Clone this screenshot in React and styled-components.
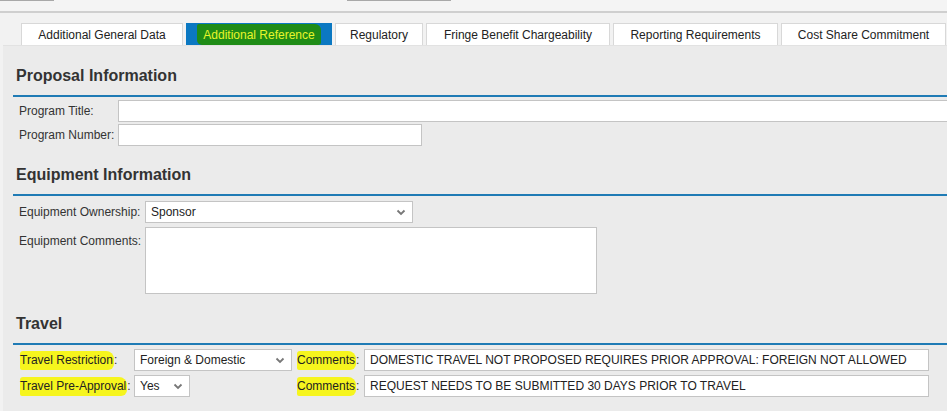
import React from "react";
import styled, { createGlobalStyle } from "styled-components";

const GlobalStyle = createGlobalStyle`
  html, body {
    margin: 0;
    padding: 0;
    background: #f2f2f2;
    overflow: hidden;
  }
  body {
    font-family: "Liberation Sans", Arial, sans-serif;
    font-size: 12px;
    color: #333;
  }
`;

const tabs = [
  { label: "Additional General Data", width: 162 },
  { label: "Additional Reference", width: 146, active: true },
  { label: "Regulatory", width: 88 },
  { label: "Fringe Benefit Chargeability", width: 184 },
  { label: "Reporting Requirements", width: 165 },
  { label: "Cost Share Commitment", width: 165 },
];

const Chevron = () => (
  <svg width="10" height="7" viewBox="0 0 10 7">
    <path d="M1.5 1.5 L5 5 L8.5 1.5" fill="none" stroke="#777" strokeWidth="1.8" />
  </svg>
);

const App = () => {
  return (
    <>
      <GlobalStyle />
      <TopStrip>
        <StubBox $left={0} $width={54} />
        <StubBox $left={293} $width={104} />
      </TopStrip>
      <TabBar>
        {tabs.map((t) => (
          <Tab key={t.label} $width={t.width} $active={t.active}>
            {t.active ? <TabMark>{t.label}</TabMark> : t.label}
          </Tab>
        ))}
      </TabBar>
      <Panel>
        <SectionHeader>Proposal Information</SectionHeader>
        <Rows>
          <FieldRow $labelWidth={99}>
            <Label>Program Title:</Label>
            <TextBox $width={860} />
          </FieldRow>
          <FieldRow $labelWidth={99}>
            <Label>Program Number:</Label>
            <TextBox $width={304} />
          </FieldRow>
        </Rows>

        <SectionHeader $gap={-1}>Equipment Information</SectionHeader>
        <Rows $top={5}>
          <FieldRow $labelWidth={126}>
            <Label>Equipment Ownership:</Label>
            <Select $width={268}>
              <span>Sponsor</span>
              <Chevron />
            </Select>
          </FieldRow>
          <FieldRow $labelWidth={126} $top>
            <Label $pad={7}>Equipment Comments:</Label>
            <TextArea />
          </FieldRow>
        </Rows>

        <SectionHeader>Travel</SectionHeader>
        <TravelGrid>
          <Label>
            <Mark>Travel Restriction</Mark>:
          </Label>
          <Select $width={158}>
            <span>Foreign &amp; Domestic</span>
            <Chevron />
          </Select>
          <Label>
            <Mark>Comments</Mark>:
          </Label>
          <TextBox $width={565}>
            DOMESTIC TRAVEL NOT PROPOSED REQUIRES PRIOR APPROVAL: FOREIGN NOT ALLOWED
          </TextBox>

          <Label>
            <Mark>Travel Pre-Approval</Mark>:
          </Label>
          <Select $width={56}>
            <span>Yes</span>
            <Chevron />
          </Select>
          <Label>
            <Mark>Comments</Mark>:
          </Label>
          <TextBox $width={565}>REQUEST NEEDS TO BE SUBMITTED 30 DAYS PRIOR TO TRAVEL</TextBox>
        </TravelGrid>
      </Panel>
    </>
  );
};

export default App;

const TopStrip = styled.div`
  display: flex;
  height: 11px;
  border-bottom: 2px solid #cfcfcf;
  background: #f4f4f4;
`;

const StubBox = styled.div`
  margin-left: ${(p) => p.$left}px;
  width: ${(p) => p.$width}px;
  height: 1px;
  background: #a8a8a8;
`;

const TabBar = styled.div`
  display: flex;
  gap: 3px;
  padding: 10px 0 0 21px;
  background: #f2f2f2;
`;

const Tab = styled.div`
  box-sizing: border-box;
  flex: none;
  width: ${(p) => p.$width}px;
  height: 22px;
  display: flex;
  align-items: center;
  justify-content: center;
  font-size: 12px;
  color: #222;
  background: ${(p) => (p.$active ? "#0b78c2" : "#fff")};
  border: 1px solid ${(p) => (p.$active ? "#0b78c2" : "#d8d8d8")};
  border-bottom: none;
  white-space: nowrap;
`;

const TabMark = styled.span`
  color: #e8f52a;
  background: #1f8c17;
  padding: 4px 6px 3px;
  border-radius: 2px 6px 3px 5px;
`;

const Panel = styled.div`
  box-sizing: border-box;
  margin-left: 3px;
  padding: 0 0 10px 10px;
  background: #ebebeb;
  border-top: 1px solid #e2e2e2;
  height: calc(100vh - 45px);
`;

const SectionHeader = styled.h2`
  box-sizing: border-box;
  margin: ${(p) => p.$gap || 0}px 0 0;
  padding: 19px 0 8px 3px;
  height: 51px;
  line-height: 21px;
  font-size: 16px;
  font-weight: bold;
  color: #333;
  border-bottom: 2px solid #1f7bb5;
`;

const Rows = styled.div`
  display: flex;
  flex-direction: column;
  gap: 2px;
  padding: ${(p) => p.$top || 3}px 0 0 6px;
`;

const FieldRow = styled.div`
  display: grid;
  grid-template-columns: ${(p) => p.$labelWidth}px auto;
  align-items: ${(p) => (p.$top ? "start" : "center")};
  margin-top: ${(p) => (p.$top ? 2 : 0)}px;
`;

const Label = styled.label`
  font-size: 12px;
  color: #333;
  white-space: nowrap;
  padding-top: ${(p) => p.$pad || 0}px;
`;

const Mark = styled.span`
  background: #f6f51e;
  color: #222;
  padding: 2px 1px 3px 0;
  border-radius: 3px 8px 6px 2px;
`;

const TextBox = styled.div`
  box-sizing: border-box;
  width: ${(p) => p.$width}px;
  height: 22px;
  display: flex;
  align-items: center;
  padding: 0 5px;
  background: #fff;
  border: 1px solid #c4c4c4;
  font-size: 12px;
  color: #222;
  white-space: nowrap;
  overflow: hidden;
`;

const Select = styled.div`
  box-sizing: border-box;
  width: ${(p) => p.$width}px;
  height: 22px;
  display: flex;
  align-items: center;
  justify-content: space-between;
  padding: 0 6px 0 5px;
  background: #fff;
  border: 1px solid #c4c4c4;
  font-size: 12px;
  color: #222;
  white-space: nowrap;
`;

const TextArea = styled.div`
  box-sizing: border-box;
  width: 452px;
  height: 67px;
  background: #fff;
  border: 1px solid #c4c4c4;
`;

const TravelGrid = styled.div`
  display: grid;
  grid-template-columns: 114px 163px 67px 565px;
  row-gap: 4px;
  align-items: center;
  padding: 4px 0 0 7px;
`;
